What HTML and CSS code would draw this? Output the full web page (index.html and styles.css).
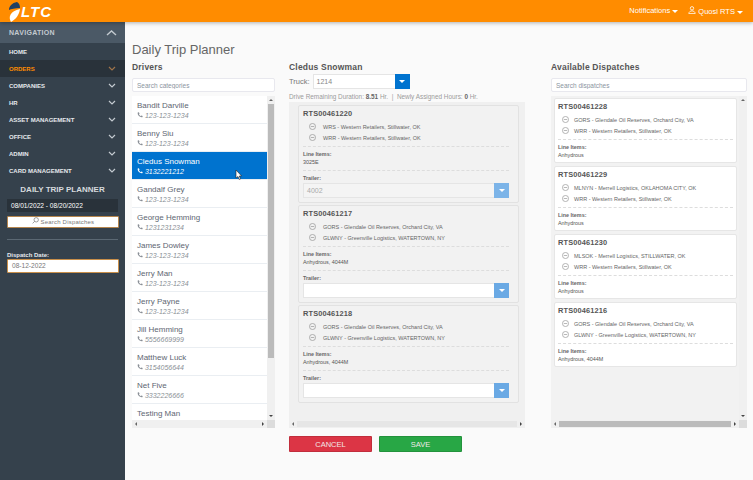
FILE: index.html
```html
<!DOCTYPE html>
<html lang="en">
  <head>
    <meta charset="UTF-8" />
    <title>Daily Trip Planner</title>
    <link rel="stylesheet" href="styles.css">
  </head>
  <body>
    <svg class="sprites" width="0" height="0">
      <symbol id="phone" viewBox="0 0 8 8"><path d="M1 .8L2.6.4L3.4 2.2L2.5 3C3 4 4 5 5 5.5L5.8 4.6L7.6 5.4L7.2 7C4 7.8 .2 4 1 .8Z" /></symbol>
      <symbol id="clock" viewBox="0 0 8 8"><circle cx="4" cy="4" r="3.5" /><path d="M2 4H6" /></symbol>
      <symbol id="chev" viewBox="0 0 8 5"><path d="M1 1L4 4L7 1" /></symbol>
    </svg>
    <header class="topbar">
      <div class="logo">
        <svg width="13" height="21" viewBox="0 0 13 21">
          <path d="M3 21C0 16 2 10 12 8C11 14 8 18 3 21Z" fill="#fff" />
          <path d="M1 9C1 5 4 2 9 1C11 2 12 4 12 7C7 7 3 8 1 9Z" fill="#1f3f63" />
        </svg>
        <span class="logo-text">LTC</span>
      </div>
      <nav class="topnav">
        <span>Notifications <i class="caret"></i></span>
        <span>
          <svg width="8" height="8" viewBox="0 0 8 8"><circle cx="4" cy="2.3" r="1.7" fill="none" stroke="#fff" stroke-width=".8" /><path d="M.8 7.6C1 4 7 4 7.2 7.6Z" fill="none" stroke="#fff" stroke-width=".8" /></svg>
          Quosl RTS <i class="caret"></i>
        </span>
      </nav>
    </header>
    <div class="main">
      <aside class="sidebar">
        <div class="nav-title">NAVIGATION <svg width="11" height="6" viewBox="0 0 11 6"><path d="M1 5L5.5 1L10 5" fill="none" stroke="#c3cad0" stroke-width="1.4" /></svg></div>
        <ul class="nav-list">
          <li>HOME</li>
          <li class="active">ORDERS <svg class="chev"><use href="#chev" /></svg></li>
          <li>COMPANIES <svg class="chev"><use href="#chev" /></svg></li>
          <li>HR <svg class="chev"><use href="#chev" /></svg></li>
          <li>ASSET MANAGEMENT <svg class="chev"><use href="#chev" /></svg></li>
          <li>OFFICE <svg class="chev"><use href="#chev" /></svg></li>
          <li>ADMIN <svg class="chev"><use href="#chev" /></svg></li>
          <li>CARD MANAGEMENT <svg class="chev"><use href="#chev" /></svg></li>
        </ul>
        <div class="planner">
          <h3>DAILY TRIP PLANNER</h3>
          <div class="range">08/01/2022 - 08/20/2022</div>
          <button class="search-btn">
            <svg width="7" height="7" viewBox="0 0 7 7"><circle cx="4.2" cy="2.8" r="2.2" fill="none" stroke="#777" stroke-width=".7" /><path d="M2.6 4.4L.6 6.4" stroke="#777" stroke-width=".7" /></svg>
            Search Dispatches
          </button>
          <hr />
          <label>Dispatch Date:</label>
          <div class="date-input">08-12-2022</div>
        </div>
      </aside>
      <main class="content">
        <h1>Daily Trip Planner</h1>
        <div class="columns">
          <section class="col-drivers">
            <h2>Drivers</h2>
            <input class="search" placeholder="Search categories" />
            <div class="scroll-box drivers-box">
              <div class="scroll-view">
                <div class="driver"><b>Bandit Darville</b><span><svg class="phone"><use href="#phone" /></svg> 123-123-1234</span></div>
                <div class="driver"><b>Benny Siu</b><span><svg class="phone"><use href="#phone" /></svg> 123-123-1234</span></div>
                <div class="driver selected"><b>Cledus Snowman</b><span><svg class="phone"><use href="#phone" /></svg> 3132221212</span>
                  <svg class="cursor" width="7" height="10" viewBox="0 0 7 10"><path d="M1 0V8L3 6.5L4.2 9.5L5.5 9L4.3 6H6.6Z" fill="#fff" stroke="#222" stroke-width=".6" /></svg>
                </div>
                <div class="driver"><b>Gandalf Grey</b><span><svg class="phone"><use href="#phone" /></svg> 123-123-1234</span></div>
                <div class="driver"><b>George Hemming</b><span><svg class="phone"><use href="#phone" /></svg> 1231231234</span></div>
                <div class="driver"><b>James Dowley</b><span><svg class="phone"><use href="#phone" /></svg> 123-123-1234</span></div>
                <div class="driver"><b>Jerry Man</b><span><svg class="phone"><use href="#phone" /></svg> 123-123-1234</span></div>
                <div class="driver"><b>Jerry Payne</b><span><svg class="phone"><use href="#phone" /></svg> 123-123-1234</span></div>
                <div class="driver"><b>Jill Hemming</b><span><svg class="phone"><use href="#phone" /></svg> 5556669999</span></div>
                <div class="driver"><b>Matthew Luck</b><span><svg class="phone"><use href="#phone" /></svg> 3154056644</span></div>
                <div class="driver"><b>Net Five</b><span><svg class="phone"><use href="#phone" /></svg> 3332226666</span></div>
                <div class="driver last"><b>Testing Man</b></div>
              </div>
              <div class="vbar drivers-vbar"><i class="arrow up"></i><i class="thumb"></i><i class="arrow down"></i></div>
              <div class="hbar"><i class="arrow left"></i><i class="thumb none"></i><i class="arrow right"></i></div>
              <div class="corner"></div>
            </div>
          </section>

          <section class="col-assigned">
            <h2>Cledus Snowman</h2>
            <div class="truck-row">
              <span class="truck-label">Truck:</span>
              <div class="select truck"><span>1214</span><i class="select-btn"><i class="caret"></i></i></div>
            </div>
            <p class="hours">Drive Remaining Duration: <b>8.51</b> Hr. &nbsp;|&nbsp; Newly Assigned Hours: <b>0</b> Hr.</p>
            <div class="assigned-panel">
              <div class="assigned-view">
                <article class="card">
                  <h4>RTS00461220</h4>
                  <div class="stop"><svg class="clock"><use href="#clock" /></svg>WRS - Western Retailers, Stillwater, OK</div>
                  <div class="stop"><svg class="clock"><use href="#clock" /></svg>WRR - Western Retailers, Stillwater, OK</div>
                  <div class="items"><b>Line Items:</b><span>3025E</span></div>
                  <div class="trailer"><b>Trailer:</b><div class="select disabled"><span>4002</span><i class="select-btn"><i class="caret"></i></i></div></div>
                </article>
                <article class="card">
                  <h4>RTS00461217</h4>
                  <div class="stop"><svg class="clock"><use href="#clock" /></svg>GORS - Glendale Oil Reserves, Orchard City, VA</div>
                  <div class="stop"><svg class="clock"><use href="#clock" /></svg>GLWNY - Greenville Logistics, WATERTOWN, NY</div>
                  <div class="items"><b>Line Items:</b><span>Anhydrous, 4044M</span></div>
                  <div class="trailer"><b>Trailer:</b><div class="select"><span></span><i class="select-btn light"><i class="caret"></i></i></div></div>
                </article>
                <article class="card">
                  <h4>RTS00461218</h4>
                  <div class="stop"><svg class="clock"><use href="#clock" /></svg>GORS - Glendale Oil Reserves, Orchard City, VA</div>
                  <div class="stop"><svg class="clock"><use href="#clock" /></svg>GLWNY - Greenville Logistics, WATERTOWN, NY</div>
                  <div class="items"><b>Line Items:</b><span>Anhydrous, 4044M</span></div>
                  <div class="trailer"><b>Trailer:</b><div class="select"><span></span><i class="select-btn light"><i class="caret"></i></i></div></div>
                </article>
              </div>
              <div class="hbar"><i class="arrow left"></i><i class="thumb pale"></i><i class="arrow right"></i></div>
            </div>
            <div class="actions">
              <button class="btn-cancel">CANCEL</button>
              <button class="btn-save">SAVE</button>
            </div>
          </section>

          <section class="col-available">
            <h2>Available Dispatches</h2>
            <input class="search" placeholder="Search dispatches" />
            <div class="scroll-box available-box">
              <div class="scroll-view cards-view">
                <article class="card white">
                  <h4>RTS00461228</h4>
                  <div class="stop"><svg class="clock"><use href="#clock" /></svg>GORS - Glendale Oil Reserves, Orchard City, VA</div>
                  <div class="stop"><svg class="clock"><use href="#clock" /></svg>WRR - Western Retailers, Stillwater, OK</div>
                  <div class="items"><b>Line Items:</b><span>Anhydrous</span></div>
                </article>
                <article class="card white">
                  <h4>RTS00461229</h4>
                  <div class="stop"><svg class="clock"><use href="#clock" /></svg>MLNYN - Merrell Logistics, OKLAHOMA CITY, OK</div>
                  <div class="stop"><svg class="clock"><use href="#clock" /></svg>WRR - Western Retailers, Stillwater, OK</div>
                  <div class="items"><b>Line Items:</b><span>Anhydrous</span></div>
                </article>
                <article class="card white">
                  <h4>RTS00461230</h4>
                  <div class="stop"><svg class="clock"><use href="#clock" /></svg>MLSOK - Merrell Logistics, STILLWATER, OK</div>
                  <div class="stop"><svg class="clock"><use href="#clock" /></svg>WRR - Western Retailers, Stillwater, OK</div>
                  <div class="items"><b>Line Items:</b><span>Anhydrous</span></div>
                </article>
                <article class="card white">
                  <h4>RTS00461216</h4>
                  <div class="stop"><svg class="clock"><use href="#clock" /></svg>GORS - Glendale Oil Reserves, Orchard City, VA</div>
                  <div class="stop"><svg class="clock"><use href="#clock" /></svg>GLWNY - Greenville Logistics, WATERTOWN, NY</div>
                  <div class="items"><b>Line Items:</b><span>Anhydrous, 4044M</span></div>
                </article>
              </div>
              <div class="vbar"><i class="arrow up"></i><i class="thumb none"></i><i class="arrow down"></i></div>
              <div class="hbar"><i class="arrow left"></i><i class="thumb"></i><i class="arrow right"></i></div>
              <div class="corner"></div>
            </div>
          </section>
        </div>
      </main>
    </div>
  </body>
</html>
```

FILE: styles.css
```css
* {
  box-sizing: border-box;
}
html, body {
  height: 100%;
}
body {
  margin: 0;
  font-family: "Liberation Sans", Arial, sans-serif;
  color: #555;
  background-color: #fafafa;
  overflow: hidden;
  display: flex;
  flex-direction: column;
}
.sprites {
  position: absolute;
}
.caret {
  display: inline-block;
  width: 0;
  height: 0;
  border-left: 3px solid transparent;
  border-right: 3px solid transparent;
  border-top: 3px solid #fff;
  vertical-align: middle;
}

/* top bar */
.topbar {
  height: 22px;
  flex: none;
  background-color: #ff8c00;
  box-shadow: 0 1px 4px rgba(0, 0, 0, 0.3);
  display: flex;
  justify-content: space-between;
  align-items: center;
  padding: 0 10px 0 8px;
  position: relative;
}
.logo {
  display: flex;
  align-items: center;
  gap: 0;
}
.logo-text {
  color: #fff;
  font-size: 15px;
  font-weight: bold;
  font-style: italic;
  letter-spacing: 1px;
  line-height: 15px;
}
.topnav {
  display: flex;
  gap: 10px;
  color: #fff;
  font-size: 7.5px;
}

.main {
  flex: 1;
  display: flex;
  min-height: 0;
}

/* sidebar */
.sidebar {
  width: 125px;
  flex: none;
  background-color: #35414c;
  color: #e6e9ec;
}
.nav-title {
  height: 21px;
  background-color: #4b5966;
  color: #c3cad0;
  font-size: 7px;
  font-weight: bold;
  letter-spacing: 0.3px;
  padding: 0 8px 0 9px;
  display: flex;
  align-items: center;
  justify-content: space-between;
}
.nav-list {
  list-style: none;
  margin: 0;
  padding: 0;
  font-size: 6px;
  font-weight: bold;
}
.nav-list li {
  height: 17px;
  padding: 0 9px;
  display: flex;
  align-items: center;
  justify-content: space-between;
}
.nav-list li.active {
  background-color: #29323a;
  color: #ff8c00;
}
.chev {
  width: 8px;
  height: 5px;
  fill: none;
  stroke: #c3cad0;
  stroke-width: 1.2;
}
.active .chev {
  stroke: #a0744a;
}
.planner {
  padding: 5px 7px;
}
.planner h3 {
  margin: 0 0 3px;
  font-size: 8px;
  line-height: 12px;
  text-align: center;
  color: #d5dade;
}
.range {
  height: 13px;
  background-color: #29323a;
  color: #fff;
  font-size: 6.6px;
  line-height: 13px;
  padding-left: 4px;
  margin-bottom: 4px;
}
.search-btn {
  display: block;
  width: 112px;
  height: 12px;
  padding: 0;
  background-color: #fff;
  border: 1px solid #b5854d;
  border-radius: 1px;
  color: #777;
  font-family: inherit;
  font-size: 6px;
  letter-spacing: 0.2px;
  line-height: 10px;
}
.planner hr {
  border: none;
  border-top: 1px solid #5b6873;
  margin: 11px 0 11px;
}
.planner label {
  display: block;
  font-size: 6px;
  font-weight: bold;
  line-height: 8px;
}
.date-input {
  width: 112px;
  height: 14px;
  background-color: #fff;
  border: 1px solid #c98f4a;
  border-radius: 1px;
  color: #777;
  font-size: 6.6px;
  line-height: 12px;
  padding-left: 4px;
}

/* content */
.content {
  flex: 1;
  min-width: 0;
  padding: 20px 6px 0 7px;
}
h1 {
  margin: 0 0 3px;
  font-size: 13px;
  line-height: 16px;
  font-weight: normal;
  color: #666;
}
h2 {
  margin: 0;
  font-size: 8.5px;
  line-height: 12px;
  font-weight: bold;
  color: #555;
  letter-spacing: 0.2px;
}
.columns {
  display: flex;
}
.col-drivers {
  width: 143px;
  flex: none;
  margin-right: 14px;
}
.col-assigned {
  width: 236px;
  flex: none;
  margin-right: 26px;
}
.col-available {
  width: 196px;
  flex: none;
}
.search {
  display: block;
  width: 100%;
  height: 14px;
  margin: 5px 0 4px;
  padding: 0 4px;
  background-color: #fff;
  border: 1px solid #e8e8ee;
  border-radius: 2px;
  font-family: inherit;
  font-size: 6.5px;
  outline: none;
}
.search::placeholder {
  color: #8a94a0;
}

/* drawn scrollbars, the photo browser hides the real ones */
.scroll-box {
  display: grid;
  grid-template-columns: 1fr 8px;
  grid-template-rows: 1fr 8px;
}
.scroll-view {
  overflow: hidden;
  min-width: 0;
  min-height: 0;
}
.vbar, .hbar {
  display: flex;
  align-items: center;
  background-color: #f0f0f0;
}
.vbar {
  flex-direction: column;
}
.thumb {
  flex: 1;
  align-self: stretch;
  background-color: #bbb;
}
.thumb.none {
  background-color: transparent;
}
.thumb.pale {
  background-color: #e6e6e6;
}
.vbar .thumb {
  margin: 0 1px;
}
.hbar .thumb {
  margin: 1px 0;
}
.arrow {
  flex: none;
  width: 8px;
  height: 8px;
  display: flex;
  align-items: center;
  justify-content: center;
}
.arrow::after {
  content: '';
  border: 2px solid transparent;
}
.arrow.up::after {
  border-bottom-color: #666;
  margin-top: -2px;
}
.arrow.down::after {
  border-top-color: #444;
  margin-top: 2px;
}
.arrow.left::after {
  border-right-color: #666;
  margin-left: -2px;
}
.arrow.right::after {
  border-left-color: #444;
  margin-left: 2px;
}
.corner {
  background-color: #dcdcdc;
}

/* drivers */
.drivers-box {
  height: 332px;
  background-color: #fff;
}
.drivers-vbar {
  background-color: #f0f0f0;
}
.drivers-vbar .thumb {
  flex: none;
  height: 254px;
}
.drivers-vbar .arrow.down {
  margin-top: auto;
}
.driver {
  position: relative;
  height: 28px;
  padding: 4px 4px 0 5px;
  border-bottom: 1px solid #eaeef2;
  font-size: 8px;
  line-height: 11px;
  color: #5e6672;
}
.driver.last {
  height: 24px;
  border-bottom: none;
}
.driver b {
  display: block;
  font-weight: normal;
}
.driver span {
  display: block;
  color: #8a8f96;
  font-size: 7px;
  font-style: italic;
  line-height: 10px;
}
.phone {
  width: 6px;
  height: 6px;
  fill: #8a8f96;
}
.driver.selected {
  background-color: #0073cf;
  color: #fff;
}
.driver.selected span {
  color: #fff;
}
.driver.selected .phone {
  fill: #fff;
}
.cursor {
  position: absolute;
  right: 25px;
  top: 18px;
}

/* middle */
.truck-row {
  display: flex;
  align-items: center;
  gap: 3px;
  margin: 1px 0 3px;
  font-size: 7.5px;
  color: #777;
}
.select {
  height: 15px;
  display: flex;
  background-color: #fff;
  border: 1px solid #e5e5e5;
  font-size: 7px;
  line-height: 13px;
  color: #888;
}
.select span {
  flex: 1;
  padding-left: 3px;
}
.select.truck {
  width: 97px;
}
.select-btn {
  width: 15px;
  flex: none;
  margin: -1px;
  background-color: #0073cf;
  display: flex;
  align-items: center;
  justify-content: center;
}
.select-btn.light {
  background-color: #6aa9e4;
}
.select.disabled {
  background-color: #f4f4f4;
  color: #aaa;
}
.select.disabled .select-btn {
  background-color: #7cb4e8;
}
.hours {
  margin: 0 0 1px;
  font-size: 6.4px;
  line-height: 9px;
  color: #9a9a9a;
}
.hours b {
  color: #666;
}
.assigned-panel {
  height: 326px;
  background-color: #f0f0f0;
  display: flex;
  flex-direction: column;
}
.assigned-view {
  flex: 1;
  padding: 3px 6px 0 9px;
  overflow: hidden;
}
.card {
  background-color: #f2f2f2;
  border: 1px solid #e2e2e2;
  border-radius: 2px;
  padding: 2px 9px 4px 4px;
  margin-bottom: 2px;
}
.card h4 {
  margin: 0 0 1px;
  font-size: 7.4px;
  line-height: 12px;
  font-weight: bold;
  color: #555;
  letter-spacing: 0.15px;
}
.stop {
  height: 11px;
  display: flex;
  align-items: center;
  padding-left: 6px;
  font-size: 5.5px;
  color: #666;
}
.clock {
  flex: none;
  width: 7px;
  height: 7px;
  margin-right: 7px;
  fill: none;
  stroke: #777;
  stroke-width: 0.6;
}
.items {
  margin-top: 3px;
  padding-top: 3px;
  border-top: 1px dashed #ddd;
  font-size: 5.4px;
  line-height: 8px;
}
.items b, .trailer b {
  display: block;
  color: #666;
}
.trailer {
  margin-top: 4px;
  padding-top: 3px;
  border-top: 1px dashed #ddd;
  font-size: 5.4px;
  line-height: 8px;
}
.trailer .select {
  margin-top: 1px;
}
.actions {
  display: flex;
  gap: 7px;
  margin-top: 8px;
}
.actions button {
  width: 83px;
  height: 16px;
  padding: 0;
  border: 1px solid rgba(0, 0, 0, 0.12);
  border-radius: 1px;
  color: #f2e8e8;
  font-family: inherit;
  font-size: 7.5px;
}
.btn-cancel {
  background-color: #dc3545;
}
.btn-save {
  background-color: #28a745;
}

/* right */
.available-box {
  height: 332px;
  background-color: #f2f2f2;
}
.cards-view {
  padding: 2px 2px 0 3px;
}
.card.white {
  background-color: #fff;
  border-color: #e6e6e6;
  padding: 2px 3px 3px;
  margin-bottom: 3px;
}
.white .stop {
  padding-left: 4px;
}
.white .clock {
  margin-right: 5px;
}
```
